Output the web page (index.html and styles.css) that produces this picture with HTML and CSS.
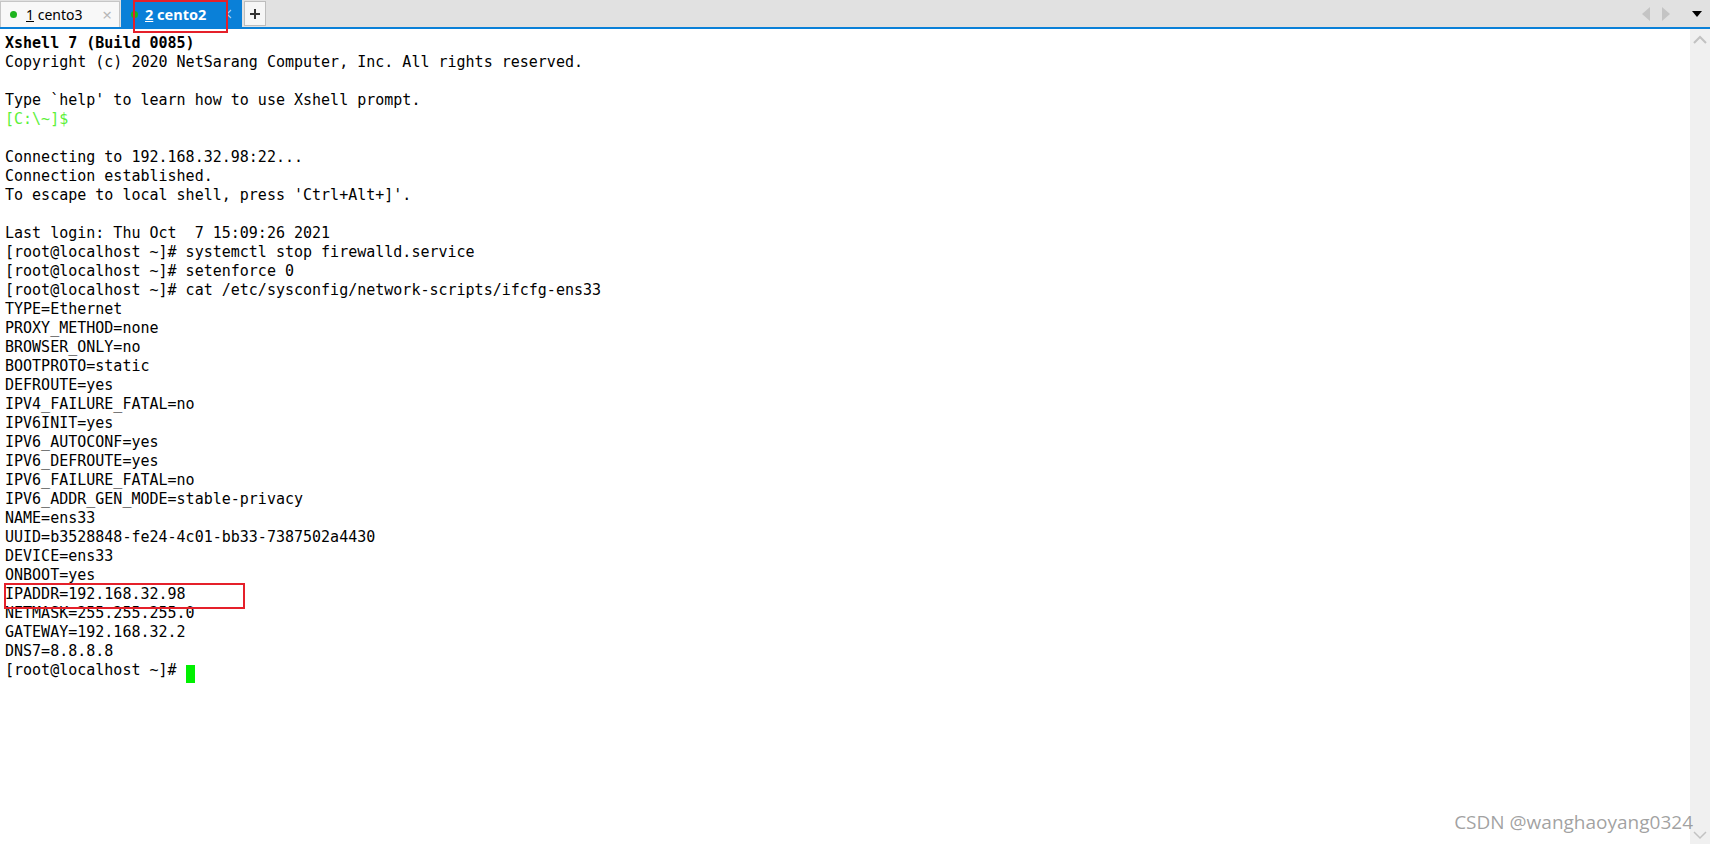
FILE: index.html
```
<!DOCTYPE html>
<html lang="en">
<head>
    <meta charset="UTF-8">
    <meta name="viewport" content="width=device-width, initial-scale=1.0">
    <title>Xshell 7</title>
    <link rel="stylesheet" href="styles.css">
</head>
<body>

<div class="tabbar">
    <div class="tab">
        <span class="dot"></span>
        <span class="label"><u>1</u> cento3</span>
        <span class="close">&times;</span>
    </div>
    <div class="tab active">
        <span class="dot"></span>
        <span class="label"><u>2</u> cento2</span>
        <svg class="chev" width="8" height="10" viewBox="0 0 8 10"><polyline points="6,1 2,5 6,9" fill="none" stroke="#a9cdf0" stroke-width="1.2"/></svg>
    </div>
    <div class="add">
        <svg width="12" height="12" viewBox="0 0 12 12"><path d="M6 1v10M1 6h10" stroke="#333" stroke-width="2"/></svg>
    </div>
    <div class="tabnav">
        <svg width="10" height="14" viewBox="0 0 10 14"><polygon points="9,0 9,14 1,7" fill="#c4c4c4"/></svg>
        <svg width="10" height="14" viewBox="0 0 10 14"><polygon points="1,0 1,14 9,7" fill="#c4c4c4"/></svg>
        <svg class="menu" width="10" height="6" viewBox="0 0 10 6"><polygon points="0,0 10,0 5,6" fill="#000"/></svg>
    </div>
    <div class="redbox tabmark"></div>
</div>

<div class="main">
<pre class="terminal"><b>Xshell 7 (Build 0085)</b>
Copyright (c) 2020 NetSarang Computer, Inc. All rights reserved.

Type `help' to learn how to use Xshell prompt.
<span class="local">[C:\~]$</span>

Connecting to 192.168.32.98:22...
Connection established.
To escape to local shell, press 'Ctrl+Alt+]'.

Last login: Thu Oct  7 15:09:26 2021
[root@localhost ~]# systemctl stop firewalld.service
[root@localhost ~]# setenforce 0
[root@localhost ~]# cat /etc/sysconfig/network-scripts/ifcfg-ens33
TYPE=Ethernet
PROXY_METHOD=none
BROWSER_ONLY=no
BOOTPROTO=static
DEFROUTE=yes
IPV4_FAILURE_FATAL=no
IPV6INIT=yes
IPV6_AUTOCONF=yes
IPV6_DEFROUTE=yes
IPV6_FAILURE_FATAL=no
IPV6_ADDR_GEN_MODE=stable-privacy
NAME=ens33
UUID=b3528848-fe24-4c01-bb33-7387502a4430
DEVICE=ens33
ONBOOT=yes
<span class="mark">IPADDR=192.168.32.98</span>
NETMASK=255.255.255.0
GATEWAY=192.168.32.2
DNS7=8.8.8.8
[root@localhost ~]# <span class="cursor"> </span></pre>
    <div class="scrollbar">
        <svg width="14" height="9" viewBox="0 0 14 9"><polyline points="1,8 7,2 13,8" fill="none" stroke="#c2c2c2" stroke-width="2"/></svg>
        <svg width="14" height="9" viewBox="0 0 14 9"><polyline points="1,1 7,7 13,1" fill="none" stroke="#c2c2c2" stroke-width="1.5"/></svg>
    </div>
    <div class="watermark">CSDN @wanghaoyang0324</div>
</div>

</body>
</html>
```

FILE: styles.css
```
* {
  box-sizing: border-box;
}
html, body {
  margin: 0;
  height: 100%;
  overflow: hidden;
  background-color: #fff;
}
body {
  font-family: "Noto Sans", sans-serif;
}
.tabbar {
  position: relative;
  display: flex;
  align-items: flex-end;
  height: 29px;
  background-color: #e1e1e1;
  border-bottom: 2px solid #0a80d8;
}
.tab {
  display: flex;
  align-items: center;
  width: 120px;
  height: 26px;
  padding-left: 9px;
  margin-right: 1px;
  background-color: #f8f8f8;
  border: 1px solid #c6c6c6;
  border-bottom: none;
  font-size: 14px;
  color: #000;
}
.tab.active {
  width: 121px;
  height: 27px;
  background-color: #0a80d8;
  border-color: #0a80d8;
  color: #fff;
  font-weight: bold;
  font-size: 14.5px;
}
.dot {
  width: 7px;
  height: 7px;
  border-radius: 50%;
  background-color: #1db31d;
  margin-right: 9px;
}
.tab.active .dot {
  margin-right: 7px;
}
.label {
  flex: 1;
}
.label u {
  text-decoration-thickness: 1px;
}
.close {
  color: #b8b8b8;
  font-size: 17px;
  margin-right: 7px;
}
.chev {
  margin-right: 8px;
}
.add {
  display: flex;
  align-items: center;
  justify-content: center;
  width: 22px;
  height: 25px;
  margin-left: 1px;
  margin-bottom: 1px;
  background-color: #f6f6f6;
  border: 1px solid #bdbdbd;
}
.tabnav {
  display: flex;
  align-items: center;
  gap: 10px;
  margin-left: auto;
  height: 27px;
  padding-right: 8px;
}
.tabnav .menu {
  margin-left: 11px;
}
.redbox {
  position: absolute;
  border: 2px solid #e5202a;
}
.tabmark {
  left: 133px;
  top: 0;
  width: 95px;
  height: 33px;
  z-index: 2;
}
.main {
  position: relative;
  display: flex;
  height: calc(100% - 29px);
}
.terminal {
  flex: 1;
  margin: 0;
  padding: 5px 5px;
  font-family: "DejaVu Sans Mono", monospace;
  font-size: 15px;
  line-height: 19px;
  color: #000;
}
.local {
  color: #5cf03a;
}
.mark {
  position: relative;
}
.mark::after {
  content: "";
  position: absolute;
  left: -1px;
  top: -2px;
  width: 237px;
  height: 22px;
  border: 2px solid #e5202a;
}
.cursor {
  display: inline-block;
  width: 9px;
  height: 18px;
  vertical-align: -4px;
  background-color: #00f000;
}
.scrollbar {
  display: flex;
  flex-direction: column;
  justify-content: space-between;
  align-items: center;
  width: 20px;
  padding: 6px 0 4px;
  background-color: #f0f0f0;
}
.watermark {
  position: absolute;
  right: 17px;
  bottom: 9px;
  font-family: "Open Sans", sans-serif;
  font-size: 19px;
  color: rgba(120, 120, 120, 0.7);
}
```
